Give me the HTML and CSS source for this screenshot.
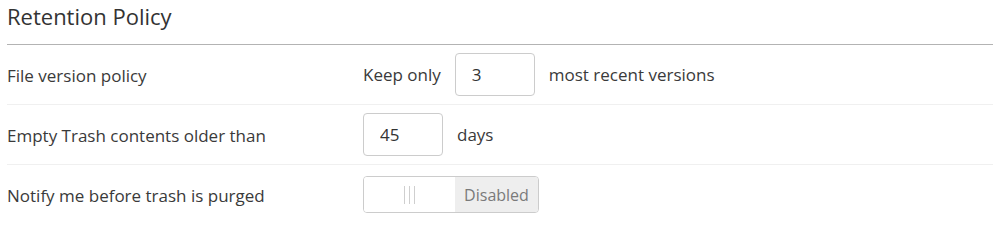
FILE: index.html
```
<!DOCTYPE html>
<html>
<head>
<meta charset="utf-8">
<link rel="stylesheet" href="styles.css">
</head>
<body>
<div class="panel">
  <h2 class="title">Retention Policy</h2>
  <div class="row">
    <div class="label">File version policy</div>
    <div class="value">
      <span>Keep only</span>
      <input class="num" type="text" value="3">
      <span>most recent versions</span>
    </div>
  </div>
  <div class="row">
    <div class="label">Empty Trash contents older than</div>
    <div class="value">
      <input class="num" type="text" value="45">
      <span>days</span>
    </div>
  </div>
  <div class="row last">
    <div class="label">Notify me before trash is purged</div>
    <div class="value">
      <div class="switch">
        <div class="handle"><span class="grip"></span><span class="grip"></span><span class="grip"></span></div>
        <div class="state">Disabled</div>
      </div>
    </div>
  </div>
</div>
</body>
</html>
```
FILE: styles.css
```
html, body {
  margin: 0;
  padding: 0;
  background: #fff;
}
body {
  font-family: "Open Sans", "Liberation Sans", sans-serif;
  color: #3a3a3a;
}
.panel {
  margin: 0 7px;
}
.title {
  margin: 0;
  font-size: 22px;
  font-weight: 400;
  line-height: 30px;
  padding-top: 1px;
  height: 45px;
  box-sizing: border-box;
  border-bottom: 1px solid #b3b3b3;
  color: #333;
}
.row {
  display: flex;
  align-items: center;
  min-height: 59px;
  border-bottom: 1px solid #f0f0f0;
  font-size: 17px;
}
.row.last {
  border-bottom: none;
}
.label {
  width: 356px;
  flex: none;
  padding-top: 2px;
}
.value {
  display: flex;
  align-items: center;
  gap: 14px;
}
.num {
  width: 80px;
  height: 43px;
  box-sizing: border-box;
  border: 1px solid #cccccc;
  border-radius: 4px;
  padding: 0 0 0 16px;
  font-family: "Open Sans", "Liberation Sans", sans-serif;
  font-size: 17px;
  color: #333;
  outline: none;
  margin: 0;
}
.switch {
  display: flex;
  width: 176px;
  height: 37px;
  box-sizing: border-box;
  border: 1px solid #cccccc;
  border-radius: 4px;
  overflow: hidden;
}
.handle {
  width: 91px;
  flex: none;
  display: flex;
  justify-content: center;
  align-items: center;
  gap: 4px;
  background: #fff;
}
.grip {
  width: 1px;
  height: 18px;
  background: #cfcfcf;
}
.state {
  flex: 1;
  background: #eeeeee;
  color: #7a7a7a;
  font-size: 16px;
  display: flex;
  align-items: center;
  justify-content: center;
}
```
